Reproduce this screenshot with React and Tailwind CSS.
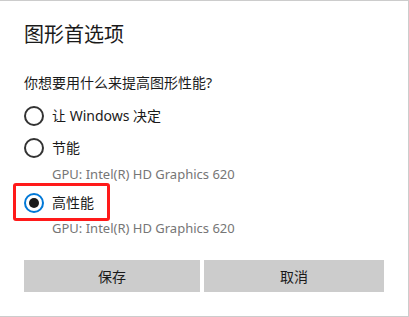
import React, { useState } from 'react';

const options = [
    { id: 'auto', label: '让 Windows 决定' },
    { id: 'save', label: '节能', gpu: 'GPU: Intel(R) HD Graphics 620' },
    { id: 'high', label: '高性能', gpu: 'GPU: Intel(R) HD Graphics 620', marked: true },
];

function Radio({ checked }) {
    if (checked) {
        return (
            <span className="w-5 h-5 rounded-full border-2 border-[#0078d7] flex items-center justify-center shrink-0">
                <span className="w-[10px] h-[10px] rounded-full bg-[#1a1a1a]" />
            </span>
        );
    }
    return <span className="w-5 h-5 rounded-full border-2 border-[#333333] shrink-0" />;
}

export default function App() {
    const [choice, setChoice] = useState('high');

    return (
        <div
            className="w-[409px] h-[317px] bg-white border-t border-r border-b border-[#cccccc] text-[#1a1a1a] overflow-hidden"
            style={{ fontFamily: '"Segoe UI", "Noto Sans", "Noto Sans CJK SC", sans-serif' }}
        >
            <div className="pl-6 pr-6 pt-5">
                <h1 className="text-[20px] leading-[28px] font-normal">图形首选项</h1>
                <p className="mt-6 text-[14px] leading-5">你想要用什么来提高图形性能?</p>

                <div className="mt-[13px] flex flex-col">
                    {options.map((opt, i) => (
                        <div key={opt.id} className={i === 1 ? 'mt-3' : i === 2 ? 'mt-[9px]' : ''}>
                            <button
                                onClick={() => setChoice(opt.id)}
                                className="relative flex items-center gap-2 h-5 text-[14px] leading-5"
                            >
                                <Radio checked={choice === opt.id} />
                                <span>{opt.label}</span>
                                {opt.marked && (
                                    <span className="absolute -left-[11px] -top-[10px] w-[97px] h-[38px] border-[3px] border-[#ff1a1a] rounded-[3px]" />
                                )}
                            </button>
                            {opt.gpu && (
                                <div className={`pl-7 text-[13px] leading-5 text-[#767676] ${i === 1 ? 'mt-[6px]' : 'mt-[5px]'}`}>
                                    {opt.gpu}
                                </div>
                            )}
                        </div>
                    ))}
                </div>

                <div className="mt-[22px] flex gap-1">
                    <button className="w-[176px] h-8 bg-[#cccccc] text-[14px]">保存</button>
                    <button className="w-[180px] h-8 bg-[#cccccc] text-[14px]">取消</button>
                </div>
            </div>
        </div>
    );
}
